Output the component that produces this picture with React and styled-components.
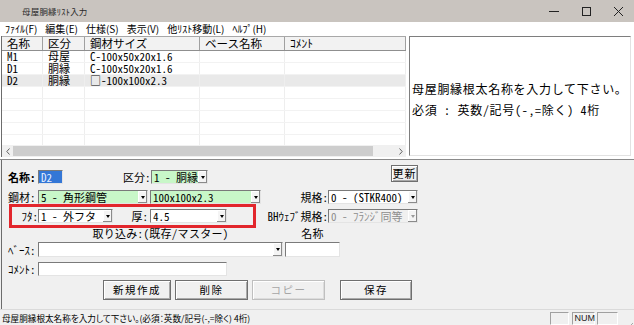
import React from 'react';
import styled, { createGlobalStyle } from 'styled-components';

const FONT = `"Noto Sans CJK JP", "Noto Sans", sans-serif`;

const GlobalStyle = createGlobalStyle`
  html, body {
    margin: 0;
    padding: 0;
  }
  body {
    width: 634px;
    height: 325px;
    overflow: hidden;
    background: #f0f0f0;
    font-family: ${FONT};
    color: #000;
  }
`;

const rows = [
  ['M1', '母屋', 'C-100x50x20x1.6'],
  ['D1', '胴縁', 'C-100x50x20x1.6'],
  ['D2', '胴縁', '□-100x100x2.3'],
  ['', '', ''],
  ['', '', ''],
  ['', '', ''],
  ['', '', ''],
  ['', '', ''],
];

const columns = ['名称', '区分', '鋼材サイズ', 'ベース名称', 'ｺﾒﾝﾄ'];

const Window = styled.div`
  width: 634px;
  height: 325px;
  display: flex;
  flex-direction: column;
`;

const TitleBar = styled.div`
  height: 22px;
  flex: none;
  display: flex;
  align-items: center;
  background: #c9c4bf;
  padding-left: 22px;
`;

const Title = styled.span`
  font-size: 8.5px;
  color: #2a2a2a;
  letter-spacing: 0.2px;
`;

const Controls = styled.div`
  margin-left: auto;
  display: flex;
  height: 100%;
`;

const Control = styled.div`
  width: 32px;
  display: flex;
  align-items: center;
  justify-content: center;
`;

const MenuBar = styled.div`
  height: 14px;
  flex: none;
  display: flex;
  align-items: center;
  gap: 8px;
  padding-left: 5px;
  background: #fff;
  font-size: 10px;
  line-height: 14px;
`;

const Upper = styled.div`
  height: 121px;
  flex: none;
  display: flex;
  background: #fff;
`;

const ListView = styled.div`
  width: 404px;
  margin-left: 1px;
  border-left: 1px solid #6c6c6c;
  display: flex;
  flex-direction: column;
`;

const ListGrid = styled.div`
  display: grid;
  grid-template-columns: 41px 42px 115px 85px 1fr;
`;

const HeaderRow = styled(ListGrid)`
  height: 15px;
  box-sizing: border-box;
  background: #f2f2f2;
  border-top: 1px solid #a8a8a8;
  border-bottom: 1px solid #8f8f8f;
`;

const HeaderCell = styled.div`
  border-right: 1px solid #a0a0a0;
  padding-left: 5px;
  font-size: 11.5px;
  line-height: 13px;
  white-space: nowrap;
`;

const Body = styled.div`
  flex: 1;
  overflow: hidden;
`;

const Row = styled(ListGrid)`
  height: 12px;
  background: ${p => (p.$selected ? '#e9e9e9' : '#fff')};
  border-bottom: 1px solid #f2f2f2;
  box-sizing: border-box;
`;

const Cell = styled.div`
  border-right: 1px solid #eeeeee;
  padding-left: 5px;
  font-size: 11px;
  line-height: 11px;
  font-feature-settings: "hwid";
  white-space: nowrap;
`;

const Scrollbar = styled.div`
  height: 12px;
  flex: none;
  display: flex;
  background: #f0f0f0;
`;

const ScrollArrow = styled.div`
  width: 11px;
  display: flex;
  align-items: center;
  justify-content: center;
`;

const Track = styled.div`
  flex: 1;
  display: flex;
  align-items: center;
`;

const Thumb = styled.div`
  width: 360px;
  height: 10px;
  background: #cdcdcd;
`;

const InfoPanel = styled.div`
  flex: 1;
  margin: 0 3px 1px 3px;
  border: 1px solid;
  border-color: #7e7e7e #e2e2e2 #e2e2e2 #7e7e7e;
  background: #fff;
  padding: 44px 0 0 2px;
  font-size: 12px;
  line-height: 16px;
  letter-spacing: 0.7px;
  font-feature-settings: "hwid";
  white-space: nowrap;
`;

const InfoLine = styled.div`
  & + & {
    margin-top: 5px;
  }
`;

const Splitter = styled.div`
  height: 3px;
  flex: none;
  background: #fff;
  border-bottom: 1px solid #8a8a8a;
  box-sizing: border-box;
`;

const Form = styled.div`
  flex: 1;
  margin-left: 1px;
  border-left: 1px solid #6c6c6c;
  padding: 10px 0 0 6px;
  font-size: 11px;
  line-height: 12px;
  font-feature-settings: "hwid";
  display: flex;
  flex-direction: column;
`;

const FormRow = styled.div`
  width: 410px;
  display: flex;
  align-items: center;
  height: ${p => p.$h || 14}px;
  margin-top: ${p => p.$mt || 0}px;
  box-sizing: border-box;
`;

const Label = styled.span`
  width: ${p => (p.$w ? `${p.$w}px` : 'auto')};
  flex: none;
  text-align: ${p => (p.$left ? 'left' : 'right')};
  padding-right: ${p => p.$pr || 0}px;
  box-sizing: border-box;
  font-weight: ${p => (p.$bold ? 700 : 400)};
  margin-left: ${p => (p.$auto ? 'auto' : `${p.$ml || 0}px`)};
  white-space: nowrap;
`;

const Caption = styled.span`
  width: ${p => p.$w}px;
  flex: none;
  margin-left: ${p => p.$ml || 0}px;
  text-align: center;
  letter-spacing: 0.3px;
  white-space: nowrap;
`;

const ComboBox = styled.div`
  width: ${p => p.$w}px;
  height: ${p => p.$h || 14}px;
  flex: none;
  margin-left: ${p => p.$ml || 0}px;
  display: flex;
  box-sizing: border-box;
  border: 1px solid;
  border-color: #7a7a7a #e4e4e4 #e4e4e4 #7a7a7a;
  background: ${p => p.$bg};
  color: ${p => (p.$disabled ? '#8d8d8d' : '#000')};
`;

const ComboText = styled.span`
  flex: 1;
  padding-left: 2px;
  line-height: ${p => (p.$h || 14) - 2}px;
  white-space: pre;
  overflow: hidden;
`;

const DropBtn = styled.span`
  width: 9px;
  flex: none;
  display: flex;
  align-items: center;
  justify-content: center;
  background: #f4f4f4;
  box-shadow: inset -1px -1px #8a8a8a, inset 1px 1px #fff;
`;

const Caret = styled.span`
  width: 0;
  height: 0;
  border-left: 2.5px solid transparent;
  border-right: 2.5px solid transparent;
  border-top: 3px solid ${p => (p.$disabled ? '#9a9a9a' : '#000')};
`;

const TextBox = styled.div`
  width: ${p => p.$w}px;
  height: ${p => p.$h || 14}px;
  flex: none;
  margin-left: ${p => p.$ml || 0}px;
  box-sizing: border-box;
  border: 1px solid;
  border-color: #7a7a7a #e4e4e4 #e4e4e4 #7a7a7a;
  background: ${p => (p.$selected ? '#3477d6' : '#fff')};
  color: ${p => (p.$selected ? '#e6efff' : '#000')};
  padding-left: 2px;
  line-height: ${p => (p.$h || 14) - 2}px;
`;

const Highlight = styled.div`
  width: 247px;
  height: 24px;
  flex: none;
  margin-left: 1px;
  box-sizing: border-box;
  border: 3px solid #e2262c;
  display: flex;
  align-items: center;
`;

const SmallButton = styled.div`
  align-self: flex-start;
  margin: -5px 0 0 auto;
  width: 27px;
  height: 17px;
  box-sizing: border-box;
  border: 1px solid #6f6f6f;
  box-shadow: inset 1px 1px #fff, inset -1px -1px #a9a9a9;
  background: #f0f0f0;
  text-align: center;
  line-height: 15px;
  letter-spacing: 1px;
`;

const ButtonRow = styled.div`
  display: flex;
  gap: 4px;
  margin-top: 4px;
  padding-left: 95px;
`;

const Button = styled.div`
  width: ${p => p.$w}px;
  height: 20px;
  margin-left: ${p => p.$ml || 0}px;
  box-sizing: border-box;
  border: 1px solid ${p => (p.$disabled ? '#bfbfbf' : '#6f6f6f')};
  box-shadow: inset 1px 1px #fff, inset -1px -1px ${p => (p.$disabled ? '#dcdcdc' : '#a9a9a9')};
  background: #f0f0f0;
  color: ${p => (p.$disabled ? '#a6a6a6' : '#000')};
  text-align: center;
  font-size: 10.5px;
  line-height: 18px;
  letter-spacing: 1.5px;
`;

const StatusBar = styled.div`
  height: 16px;
  flex: none;
  display: flex;
  align-items: center;
  border-top: 1px solid #dadada;
  box-sizing: border-box;
  background: #f0f0f0;
`;

const StatusText = styled.span`
  padding-left: 2px;
  font-size: 8.6px;
  font-feature-settings: "palt";
  white-space: nowrap;
`;

const StatusBoxes = styled.div`
  margin-left: auto;
  display: flex;
  gap: 2.5px;
  height: 13px;
  align-self: flex-end;
`;

const StatusBox = styled.div`
  width: ${p => p.$w}px;
  box-sizing: border-box;
  border: 1px solid;
  border-color: #a0a0a0 #fff #fff #a0a0a0;
  font-family: "Liberation Sans", sans-serif;
  font-size: 9px;
  line-height: 11px;
  padding-left: 2px;
  color: #222;
`;

const Grip = styled.div`
  width: 12px;
  height: 12px;
  margin-left: 4px;
  align-self: flex-end;
`;

function Combo({ w, h, ml, bg = '#fff', disabled, children }) {
  return (
    <ComboBox $w={w} $h={h} $ml={ml} $bg={bg} $disabled={disabled}>
      <ComboText $h={h}>{children}</ComboText>
      <DropBtn>
        <Caret $disabled={disabled} />
      </DropBtn>
    </ComboBox>
  );
}

const GREEN = '#c8f7c8';

export default function App() {
  return (
    <>
      <GlobalStyle />
      <Window>
        <TitleBar>
          <Title>母屋胴縁ﾘｽﾄ入力</Title>
          <Controls>
            <Control>
              <svg width="10" height="10" viewBox="0 0 10 10">
                <path d="M0 5.5h10" stroke="#222" strokeWidth="1" />
              </svg>
            </Control>
            <Control>
              <svg width="10" height="10" viewBox="0 0 10 10">
                <rect x="1.5" y="1.5" width="8" height="8" fill="none" stroke="#222" strokeWidth="1" />
              </svg>
            </Control>
            <Control>
              <svg width="10" height="10" viewBox="0 0 10 10">
                <path d="M1 1l9 9M10 1l-9 9" stroke="#222" strokeWidth="1" />
              </svg>
            </Control>
          </Controls>
        </TitleBar>

        <MenuBar>
          <span>ﾌｧｲﾙ(F)</span>
          <span>編集(E)</span>
          <span>仕様(S)</span>
          <span>表示(V)</span>
          <span>他ﾘｽﾄ移動(L)</span>
          <span>ﾍﾙﾌﾟ(H)</span>
        </MenuBar>

        <Upper>
          <ListView>
            <HeaderRow>
              {columns.map(c => (
                <HeaderCell key={c}>{c}</HeaderCell>
              ))}
            </HeaderRow>
            <Body>
              {rows.map((r, i) => (
                <Row key={i} $selected={r[0] === 'D2'}>
                  <Cell>{r[0]}</Cell>
                  <Cell>{r[1]}</Cell>
                  <Cell>{r[2]}</Cell>
                  <Cell />
                  <Cell />
                </Row>
              ))}
            </Body>
            <Scrollbar>
              <ScrollArrow>
                <svg width="4" height="7" viewBox="0 0 4 7">
                  <path d="M3.5 0.5L0.8 3.5l2.7 3" fill="none" stroke="#606060" />
                </svg>
              </ScrollArrow>
              <Track>
                <Thumb />
              </Track>
              <ScrollArrow>
                <svg width="4" height="7" viewBox="0 0 4 7">
                  <path d="M0.5 0.5l2.7 3-2.7 3" fill="none" stroke="#606060" />
                </svg>
              </ScrollArrow>
            </Scrollbar>
          </ListView>
          <InfoPanel>
            <InfoLine>母屋胴縁根太名称を入力して下さい。</InfoLine>
            <InfoLine>必須 ： 英数/記号(-,=除く) 4桁</InfoLine>
          </InfoPanel>
        </Upper>

        <Splitter />

        <Form>
          <FormRow>
            <Label $w={30} $left $bold>名称:</Label>
            <TextBox $w={25} $selected>D2</TextBox>
            <Label $w={28} $left $ml={60}>区分:</Label>
            <Combo w={57} bg={GREEN}>1 - 胴縁</Combo>
            <SmallButton>更新</SmallButton>
          </FormRow>

          <FormRow $mt={6}>
            <Label $w={30} $left>鋼材:</Label>
            <Combo w={110} bg={GREEN}>5 - 角形鋼管</Combo>
            <Combo w={111} ml={2} bg={GREEN}>100x100x2.3</Combo>
            <Label $auto>規格:</Label>
            <Combo w={90}>0 - (STKR400)</Combo>
          </FormRow>

          <FormRow $h={24}>
            <Highlight>
              <Label $w={26}>ﾌﾀ:</Label>
              <Combo w={75}>1 - 外フタ</Combo>
              <Label $w={37} $pr={2}>厚:</Label>
              <Combo w={77}>4.5</Combo>
            </Highlight>
            <Label $auto>BHｳｪﾌﾞ規格:</Label>
            <Combo w={90} bg="#f0f0f0" disabled>0 - ﾌﾗﾝｼﾞ同等</Combo>
          </FormRow>

          <FormRow $h={12} $mt={-1}>
            <Caption $w={245} $ml={30}>取り込み:(既存/マスター)</Caption>
            <Caption $w={55} $ml={2}>名称</Caption>
          </FormRow>

          <FormRow $h={15} $mt={3}>
            <Label $w={30} $left>ﾍﾞｰｽ:</Label>
            <Combo w={245} h={15} />
            <TextBox $w={55} $h={15} $ml={2} />
          </FormRow>

          <FormRow $mt={5}>
            <Label $w={30} $left>ｺﾒﾝﾄ:</Label>
            <TextBox $w={189} />
          </FormRow>

          <ButtonRow>
            <Button $w={68}>新規作成</Button>
            <Button $w={73}>削除</Button>
            <Button $w={73} $disabled>コピー</Button>
            <Button $w={72} $ml={11}>保存</Button>
          </ButtonRow>
        </Form>

        <StatusBar>
          <StatusText>母屋胴縁根太名称を入力して下さい。(必須：英数/記号(-,=除く) 4桁)</StatusText>
          <StatusBoxes>
            <StatusBox $w={19} />
            <StatusBox $w={23}>NUM</StatusBox>
            <StatusBox $w={21} />
          </StatusBoxes>
          <Grip>
            <svg width="12" height="12" viewBox="0 0 12 12">
              <path d="M11 3L3 11M11 6L6 11M11 9L9 11" stroke="#a8a8a8" strokeWidth="1" />
            </svg>
          </Grip>
        </StatusBar>
      </Window>
    </>
  );
}
